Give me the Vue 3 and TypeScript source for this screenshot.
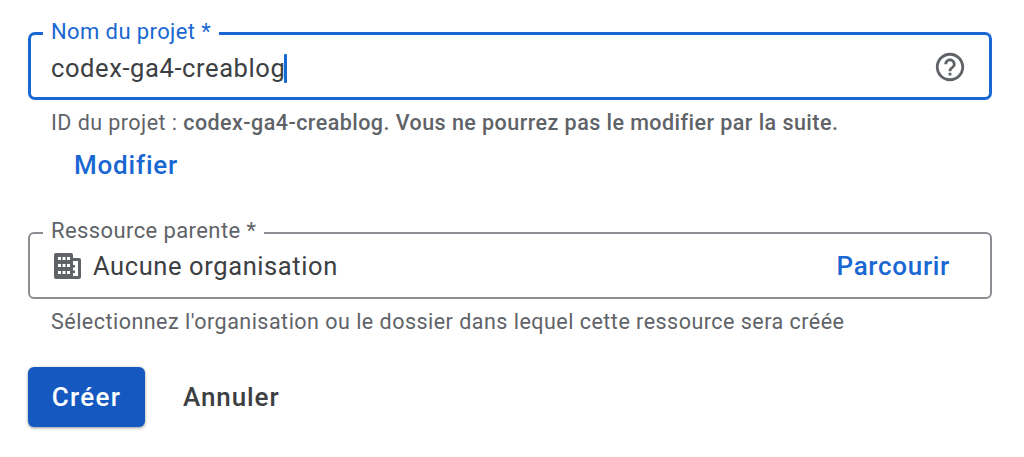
<script setup lang="ts">
const title = 'Nom du projet *'
</script>

<template>
  <main class="page">
    <section class="field focused">
      <span class="float">{{ title }}</span>
      <span class="value">codex-ga4-creablog<i class="caret"></i></span>
      <svg class="help" viewBox="0 0 24 24" aria-hidden="true">
        <path d="M11 18h2v-2h-2v2zm1-16C6.48 2 2 6.48 2 12s4.48 10 10 10 10-4.48 10-10S17.52 2 12 2zm0 18c-4.41 0-8-3.59-8-8s3.59-8 8-8 8 3.59 8 8-3.59 8-8 8zm0-14c-2.21 0-4 1.79-4 4h2c0-1.1.9-2 2-2s2 .9 2 2c0 2-3 1.75-3 5h2c0-2.25 3-2.5 3-5 0-2.21-1.79-4-4-4z" />
      </svg>
    </section>
    <p class="hint first">ID du projet : <b>codex-ga4-creablog. Vous ne pourrez pas le modifier par la suite.</b></p>
    <a class="edit">Modifier</a>

    <section class="field parent">
      <span class="float">Ressource parente *</span>
      <svg class="building" viewBox="0 0 27 26" aria-hidden="true">
        <path fill-rule="evenodd" d="M2 0h15a2 2 0 0 1 2 2v3h6a2 2 0 0 1 2 2v17a2 2 0 0 1-2 2H2a2 2 0 0 1-2-2V2a2 2 0 0 1 2-2zM4 4v3h3V4zM8.500 4v3h3V4zM13 4v3h3V4zM4 11v3h3v-3zM8.500 11v3h3v-3zM13 11v3h3v-3zM4 18v3h3v-3zM8.500 18v3h3v-3zM13 18v3h3v-3zM19 8h5v15h-5v-3h2v-2.500h-2v-3h2V12h-2z" />
      </svg>
      <span class="value org">Aucune organisation</span>
      <a class="browse">Parcourir</a>
    </section>
    <p class="hint second">Sélectionnez l'organisation ou le dossier dans lequel cette ressource sera créée</p>

    <div class="actions">
      <button class="primary" type="button">Créer</button>
      <button class="ghost" type="button">Annuler</button>
    </div>
  </main>
</template>

<style>
html, body { background: #fff; }
</style>

<style scoped>
.page {
  box-sizing: border-box;
  width: 1024px;
  height: 457px;
  padding: 32px 32px 0 28px;
  font-family: Roboto, "Liberation Sans", sans-serif;
  display: flex;
  flex-direction: column;
  align-items: flex-start;
  overflow: hidden;
}
.field {
  position: relative;
  box-sizing: border-box;
  width: 964px;
  display: flex;
  align-items: center;
  background: #fff;
}
.focused {
  height: 68px;
  border: 3px solid #1967d2;
  border-radius: 7px;
  padding: 0 22px 0 20px;
}
.parent {
  height: 67px;
  margin-top: 51px;
  border: 2px solid #8a8e92;
  border-radius: 6px;
  padding: 1px 40px 0 24px;
}
.float {
  position: absolute;
  top: -17px;
  left: 12px;
  padding: 0 8px;
  background: #fff;
  font-size: 22px;
  line-height: 28px;
  letter-spacing: 0.4px;
  color: #1967d2;
}
.parent .float {
  top: -17px;
  left: 13px;
  color: #5f6368;
}
.value {
  display: flex;
  align-items: center;
  font-size: 25.5px;
  line-height: 32px;
  color: #3c4043;
  letter-spacing: 0.6px;
}
.focused .value { margin-top: 4px; }
.caret {
  display: inline-block;
  width: 3px;
  height: 29px;
  background: #1967d2;
  margin-left: -1px;
  border-radius: 1px;
}
.help {
  width: 34px;
  height: 34px;
  margin-left: auto;
  margin-top: 2px;
  fill: #5f6368;
}
.building {
  width: 27px;
  height: 26px;
  fill: #5f6368;
  margin-right: 12px;
}
.browse {
  margin-left: auto;
  font-size: 26px;
  font-weight: 500;
  letter-spacing: 0.7px;
  color: #1967d2;
}
.hint {
  margin: 0;
  padding-left: 23px;
  font-size: 21.5px;
  line-height: 26px;
  letter-spacing: 0.48px;
  color: #5f6368;
}
.hint b { font-weight: 500; }
.first { margin-top: 10px; letter-spacing: 0.45px; }
.second { margin-top: 10px; }
.edit {
  margin: 13px 0 0 46px;
  font-size: 26px;
  line-height: 32px;
  font-weight: 500;
  letter-spacing: 0.8px;
  color: #1967d2;
}
.actions {
  display: flex;
  align-items: center;
  margin-top: 32px;
}
button {
  font: inherit;
  font-size: 26px;
  font-weight: 500;
  letter-spacing: 0.9px;
  border: 0;
  padding: 0;
  cursor: pointer;
}
.primary {
  width: 117px;
  height: 60px;
  border-radius: 6px;
  background: #1558c0;
  color: #fff;
  letter-spacing: 1.3px;
  box-shadow: 0 1px 3px 1px rgba(60, 64, 67, .2), 0 1px 2px rgba(60, 64, 67, .3);
}
.ghost {
  margin-left: 38px;
  background: transparent;
  color: #3c4043;
}
</style>
